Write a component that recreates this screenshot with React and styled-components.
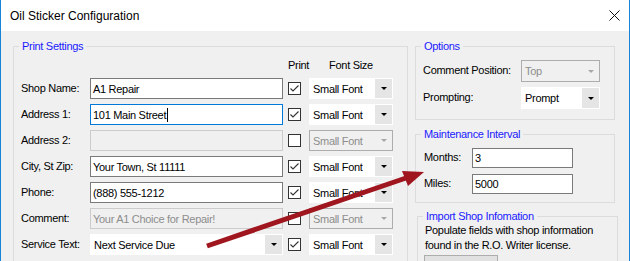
import React from 'react'
import styled, { createGlobalStyle } from 'styled-components'

const GlobalStyle = createGlobalStyle`
  html, body {
    margin: 0;
    padding: 0;
    background: #ffffff;
  }
  body {
    font-family: "Liberation Sans", Arial, sans-serif;
  }
`

const rows = [
  { label: 'Shop Name:', value: 'A1 Repair', state: 'normal', checked: true },
  { label: 'Address 1:', value: '101 Main Street', state: 'focus', checked: true, caret: true },
  { label: 'Address 2:', value: '', state: 'disabled', checked: false },
  { label: 'City, St Zip:', value: 'Your Town, St 11111', state: 'normal', checked: true },
  { label: 'Phone:', value: '(888) 555-1212', state: 'normal', checked: true },
  { label: 'Comment:', value: 'Your A1 Choice for Repair!', state: 'disabled', checked: false },
  { label: 'Service Text:', value: 'Next Service Due', state: 'combo', checked: true },
]

export default function App() {
  return (
    <>
      <GlobalStyle />
      <Window>
        <TitleBar>
          <span>Oil Sticker Configuration</span>
          <svg width="11" height="11" viewBox="0 0 11 11">
            <path d="M0.5 0.5 L10.5 10.5 M10.5 0.5 L0.5 10.5" stroke="#111" strokeWidth="1" />
          </svg>
        </TitleBar>

        <Body>
          <Group $w={395} $h={240}>
            <Legend>Print Settings</Legend>
            <PrintGrid>
              <span />
              <span />
              <HeadCell>Print</HeadCell>
              <HeadCell $center>Font Size</HeadCell>

              {rows.map((r) => (
                <React.Fragment key={r.label}>
                  <Label>{r.label}</Label>
                  {r.state === 'combo' ? (
                    <Combo $w={193}>
                      <ComboText>{r.value}</ComboText>
                      <DropButton><Arrow /></DropButton>
                    </Combo>
                  ) : (
                    <TextBox $state={r.state} $w={193}>
                      {r.value}
                      {r.caret && <Caret />}
                    </TextBox>
                  )}
                  <Check>
                    {r.checked && (
                      <svg width="11" height="11" viewBox="0 0 11 11">
                        <polyline points="1.5,5.5 4,8 9.5,2.5" fill="none" stroke="#333" strokeWidth="1.1" />
                      </svg>
                    )}
                  </Check>
                  <Combo $w={84} $disabled={r.state === 'disabled'}>
                    <ComboText>Small Font</ComboText>
                    <DropButton $disabled={r.state === 'disabled'}>
                      <Arrow $disabled={r.state === 'disabled'} />
                    </DropButton>
                  </Combo>
                </React.Fragment>
              ))}
            </PrintGrid>
          </Group>

          <RightCol>
            <Group $w={200}>
              <Legend>Options</Legend>
              <OptionsGrid>
                <Label>Comment Position:</Label>
                <Combo $w={79} $h={22} $disabled>
                  <ComboText>Top</ComboText>
                  <DropButton $disabled><Arrow $disabled /></DropButton>
                </Combo>
                <Label>Prompting:</Label>
                <Combo $w={79} $h={22}>
                  <ComboText>Prompt</ComboText>
                  <DropButton><Arrow /></DropButton>
                </Combo>
              </OptionsGrid>
            </Group>

            <Group $w={200}>
              <Legend>Maintenance Interval</Legend>
              <IntervalGrid>
                <Label>Months:</Label>
                <TextBox $state="normal" $h={20}>3</TextBox>
                <Label>Miles:</Label>
                <TextBox $state="normal" $h={20}>5000</TextBox>
              </IntervalGrid>
            </Group>

            <Group $w={201} $shift={2} $top={-1} $h={80}>
              <Legend>Import Shop Infomation</Legend>
              <ImportBody>
                <Note>
                  Populate fields with shop information
                  <br />
                  found in the R.O. Writer license.
                </Note>
                <Button>Import</Button>
              </ImportBody>
            </Group>
          </RightCol>
        </Body>

        <Overlay width="630" height="261" viewBox="0 0 630 261">
          <line x1="207" y1="246" x2="406" y2="178" stroke="#a0161f" strokeWidth="5" />
          <polygon points="424,172 408,186 402,171" fill="#a0161f" />
        </Overlay>
      </Window>
    </>
  )
}

const Window = styled.div`
  position: relative;
  width: 630px;
  height: 261px;
  box-sizing: border-box;
  border-left: 1px solid #1883d7;
  border-right: 1px solid #1883d7;
  overflow: hidden;
  display: flex;
  flex-direction: column;
  font-size: 11px;
  letter-spacing: -0.3px;
  color: #000;
`

const TitleBar = styled.div`
  flex: none;
  height: 31px;
  background: #ffffff;
  display: flex;
  align-items: center;
  justify-content: space-between;
  padding: 0 9px;
  font-size: 12px;
  letter-spacing: 0;
  color: #000;
`

const Body = styled.div`
  flex: 1;
  background: #f0f0f0;
  display: flex;
  align-items: flex-start;
  gap: 7px;
  padding: 8px 0 0 12px;
`

const RightCol = styled.div`
  display: flex;
  flex-direction: column;
  gap: 7px;
`

const Group = styled.fieldset`
  margin: ${({ $top }) => $top || 0}px 0 0 ${({ $shift }) => $shift || 0}px;
  padding: 0;
  border: 1px solid #dcdcdc;
  min-width: 0;
  box-sizing: border-box;
  width: ${({ $w }) => $w}px;
  ${({ $h }) => ($h ? `height: ${$h}px;` : '')}
`

const Legend = styled.legend`
  margin-left: 5px;
  padding: 0 3px;
  line-height: 14px;
  color: #1a1aff;
`

const PrintGrid = styled.div`
  display: grid;
  grid-template-columns: 69px 198px 21px 84px;
  grid-template-rows: 16px repeat(7, 21px);
  row-gap: 5px;
  align-items: center;
  justify-items: start;
  padding: 4px 0 0 7px;
`

const HeadCell = styled.span`
  white-space: nowrap;
  justify-self: ${({ $center }) => ($center ? 'center' : 'start')};
`

const OptionsGrid = styled.div`
  display: grid;
  grid-template-columns: 98px 79px;
  grid-template-rows: 22px 22px;
  row-gap: 5px;
  align-items: center;
  padding: 7px 0 10px 7px;
`

const IntervalGrid = styled.div`
  display: grid;
  grid-template-columns: 48px 101px;
  grid-template-rows: 20px 20px;
  row-gap: 6px;
  align-items: center;
  padding: 7px 0 8px 8px;
`

const ImportBody = styled.div`
  padding: 0 0 0 7px;
`

const Note = styled.div`
  line-height: 15px;
  white-space: nowrap;
`

const Button = styled.div`
  margin: 2px 0 0 -1px;
  width: 74px;
  height: 23px;
  box-sizing: border-box;
  border: 1px solid #adadad;
  background: #e1e1e1;
  display: flex;
  align-items: center;
  justify-content: center;
`

const Label = styled.span`
  white-space: nowrap;
  margin-top: -2px;
`

const TextBox = styled.div`
  ${({ $w }) => ($w ? `width: ${$w}px;` : '')}
  height: ${({ $h }) => $h || 21}px;
  box-sizing: border-box;
  padding: 0 2px;
  display: flex;
  align-items: center;
  white-space: nowrap;
  overflow: hidden;
  background: ${({ $state }) => ($state === 'disabled' ? '#f0f0f0' : '#ffffff')};
  color: ${({ $state }) => ($state === 'disabled' ? '#8d8d8d' : '#000')};
  border: 1px solid
    ${({ $state }) =>
      $state === 'focus' ? '#0078d7' : $state === 'disabled' ? '#cccccc' : '#7a7a7a'};
`

const Caret = styled.span`
  display: inline-block;
  width: 1px;
  height: 14px;
  margin-left: 1px;
  background: #000;
`

const Check = styled.span`
  width: 13px;
  height: 13px;
  box-sizing: border-box;
  border: 1px solid #333333;
  background: #ffffff;
  display: flex;
  align-items: center;
  justify-content: center;
`

const Combo = styled.div`
  width: ${({ $w }) => $w}px;
  height: ${({ $h }) => $h || 21}px;
  box-sizing: border-box;
  display: flex;
  align-items: stretch;
  border: 1px solid ${({ $disabled }) => ($disabled ? '#adadad' : '#ffffff')};
  background: ${({ $disabled }) => ($disabled ? '#f0f0f0' : '#ffffff')};
  color: ${({ $disabled }) => ($disabled ? '#8d8d8d' : '#000')};
`

const ComboText = styled.span`
  flex: 1;
  display: flex;
  align-items: center;
  padding-left: 3px;
  white-space: nowrap;
  overflow: hidden;
`

const DropButton = styled.span`
  width: 17px;
  flex: none;
  display: flex;
  align-items: center;
  justify-content: center;
  background: ${({ $disabled }) => ($disabled ? 'transparent' : '#e5e5e5')};
`

const Arrow = styled.span`
  width: 0;
  height: 0;
  border-left: 3px solid transparent;
  border-right: 3px solid transparent;
  border-top: 3px solid ${({ $disabled }) => ($disabled ? '#a6a6a6' : '#000')};
`

const Overlay = styled.svg`
  position: absolute;
  top: 0;
  left: -1px;
  pointer-events: none;
`
